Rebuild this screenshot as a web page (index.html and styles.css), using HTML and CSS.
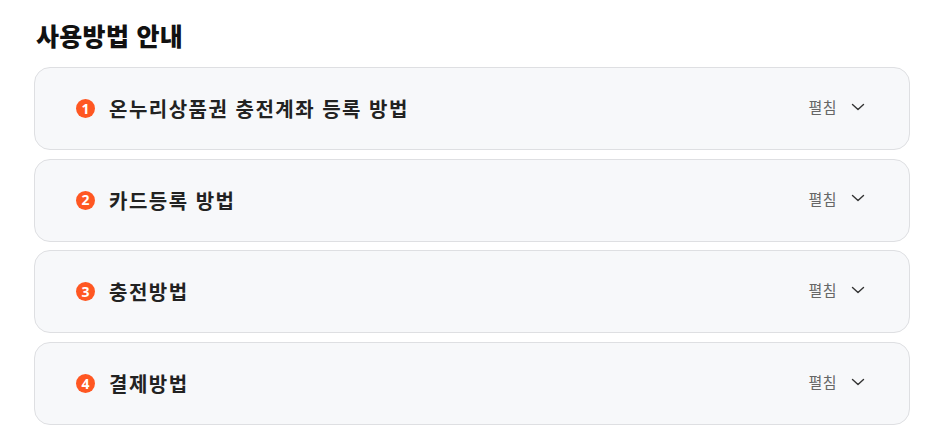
FILE: index.html
```html
<!DOCTYPE html>
<html lang="ko">
<head>
<meta charset="utf-8">
<link rel="stylesheet" href="styles.css">
</head>
<body>
<section class="guide">
  <h2 class="guide-title">사용방법 안내</h2>
  <div class="list">
    <div class="item">
      <div class="item-left"><span class="badge">1</span><span class="item-title">온누리상품권 충전계좌 등록 방법</span></div>
      <div class="item-right"><span class="toggle">펼침</span><svg class="chev" width="14" height="8" viewBox="0 0 14 8"><path d="M1.5 1.5 L7 6.5 L12.5 1.5" fill="none" stroke="#333" stroke-width="1.4" stroke-linecap="round" stroke-linejoin="round"/></svg></div>
    </div>
    <div class="item">
      <div class="item-left"><span class="badge">2</span><span class="item-title">카드등록 방법</span></div>
      <div class="item-right"><span class="toggle">펼침</span><svg class="chev" width="14" height="8" viewBox="0 0 14 8"><path d="M1.5 1.5 L7 6.5 L12.5 1.5" fill="none" stroke="#333" stroke-width="1.4" stroke-linecap="round" stroke-linejoin="round"/></svg></div>
    </div>
    <div class="item">
      <div class="item-left"><span class="badge">3</span><span class="item-title">충전방법</span></div>
      <div class="item-right"><span class="toggle">펼침</span><svg class="chev" width="14" height="8" viewBox="0 0 14 8"><path d="M1.5 1.5 L7 6.5 L12.5 1.5" fill="none" stroke="#333" stroke-width="1.4" stroke-linecap="round" stroke-linejoin="round"/></svg></div>
    </div>
    <div class="item">
      <div class="item-left"><span class="badge">4</span><span class="item-title">결제방법</span></div>
      <div class="item-right"><span class="toggle">펼침</span><svg class="chev" width="14" height="8" viewBox="0 0 14 8"><path d="M1.5 1.5 L7 6.5 L12.5 1.5" fill="none" stroke="#333" stroke-width="1.4" stroke-linecap="round" stroke-linejoin="round"/></svg></div>
    </div>
  </div>
</section>
</body>
</html>
```
FILE: styles.css
```css
html, body {
  margin: 0;
  padding: 0;
  background: #ffffff;
}
body {
  font-family: "Noto Sans CJK KR", "Noto Sans", sans-serif;
  color: #222;
}
.guide {
  padding: 17px 28px 0 34px;
}
.guide-title {
  margin: 0 0 14px 2px;
  font-size: 25px;
  line-height: 36px;
  font-weight: 900;
  color: #111;
  letter-spacing: 0.3px;
}
.list {
  display: flex;
  flex-direction: column;
  gap: 8.7px;
}
.item {
  box-sizing: border-box;
  height: 83px;
  border: 1px solid #dedfe2;
  border-radius: 16px;
  background: #f7f8fa;
  display: flex;
  align-items: center;
  justify-content: space-between;
  padding: 0 44px 0 41px;
}
.item-left {
  display: flex;
  align-items: center;
  gap: 14px;
}
.badge {
  width: 19px;
  height: 19px;
  border-radius: 50%;
  background: #ff5722;
  color: #fff;
  font-family: "Noto Sans", sans-serif;
  font-size: 14px;
  font-weight: 700;
  display: flex;
  align-items: center;
  justify-content: center;
  line-height: 1;
}
.item-title {
  font-size: 20px;
  font-weight: 700;
  color: #222;
  letter-spacing: 1.5px;
}
.item-right {
  display: flex;
  align-items: center;
  gap: 14px;
  margin-top: -4px;
}
.toggle {
  font-size: 15px;
  color: #666;
  letter-spacing: 0.5px;
}
.chev {
  display: block;
}
```
